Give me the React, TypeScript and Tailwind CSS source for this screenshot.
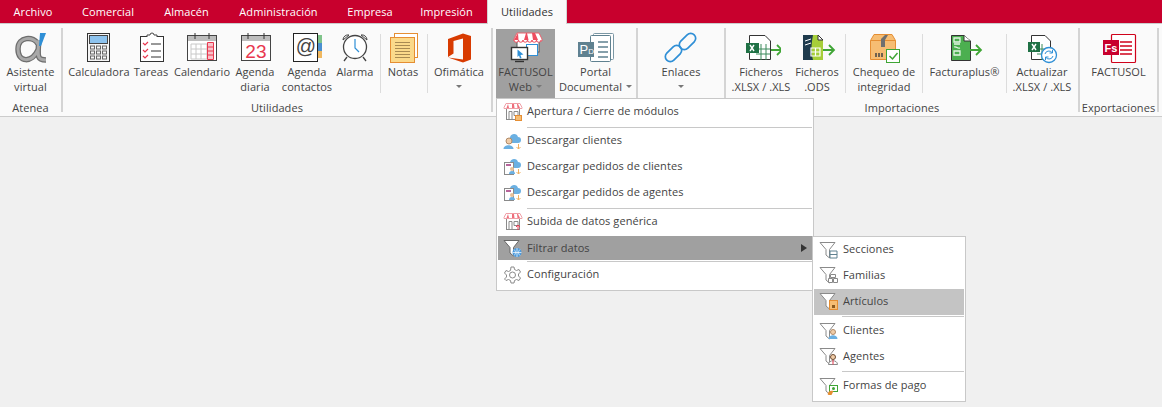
import React from "react";

type Ic = React.ReactNode;
const S = ({ children }: { children: Ic }) => (
  <svg width="40" height="32" viewBox="0 0 40 32" fill="none" className="block">{children}</svg>
);
const M = ({ children }: { children: Ic }) => (
  <svg width="20" height="20" viewBox="0 0 20 20" fill="none" className="block shrink-0">{children}</svg>
);

const Arrow = ({ x, y }: { x: number; y: number }) => (
  <path d={`M${x} ${y}h10M${x + 6} ${y - 5}l5 5l-5 5`} stroke="#3fa535" strokeWidth="1.8" />
);
const Doc = ({ x, y, w, h, fill = "#fff" }: { x: number; y: number; w: number; h: number; fill?: string }) => (
  <path d={`M${x + .5} ${y + .5}H${x + w - 6}L${x + w - .5} ${y + 6}V${y + h - .5}H${x + .5}Z`} fill={fill} stroke="#333" />
);

const alphaPath = "M27 12C23 4 7 4 7 17C7 31 21 31 27 18M28 8C26 26 27 28 35 28";

const icons: Record<string, Ic> = {
  alpha: (
    <S>
      <path d={alphaPath} stroke="#6e6e6e" strokeWidth="5.500" />
      <path d={alphaPath} stroke="#a8a8a8" strokeWidth="3" />
      <path d="M29 1h6l-5 13h-2z" fill="#2f8fd6" />
    </S>
  ),
  calc: (
    <S>
      <rect x="8.5" y="1.5" width="22" height="28" fill="#f5f5f5" stroke="#333" />
      <rect x="10.5" y="3.5" width="18" height="8" fill="#8dc3ee" stroke="#444" />
      {[15, 20, 25].map((y) => [11.5, 17.5, 23.5].map((x) => <rect key={`${x}${y}`} x={x} y={y - 1} width="4" height="3" stroke="#666" />))}
    </S>
  ),
  tasks: (
    <S>
      <rect x="9.5" y="4.5" width="23" height="25" fill="#fff" stroke="#333" />
      <path d="M16 5V3h3a2 2 0 014 0h3v2" fill="#fff" stroke="#444" />
      {[11, 18, 24].map((y) => (
        <g key={y}>
          <path d={`M12 ${y}l2 2l3-3`} stroke="#e8384f" strokeWidth="1.2" />
          <path d={`M20 ${y + 1}h10`} stroke="#333" />
        </g>
      ))}
    </S>
  ),
  cal: (
    <S>
      <rect x="5.5" y="3.5" width="29" height="25" fill="#fff" stroke="#444" />
      <rect x="6" y="4" width="28" height="5" fill="#bdbdbd" />
      <path d="M13 1v6M27 1v6" stroke="#333" />
      <path d="M9 12h16v15H9zM9 17h16M9 22h16M14 12v15M19 12v15" stroke="#c8c8c8" />
      <path d="M25.5 10.5h6v17h-6zM25.5 15h6M25.5 19h6M25.5 23h6" fill="#f9c3cb" stroke="#e8384f" />
    </S>
  ),
  agenda: (
    <S>
      <rect x="6.5" y="3.5" width="29" height="25" fill="#fff" stroke="#444" />
      <rect x="7" y="4" width="28" height="5" fill="#bdbdbd" />
      <path d="M13 1v6M29 1v6" stroke="#333" />
      <text x="21" y="26" textAnchor="middle" fontSize="19" fill="#e8384f" fontFamily="'Liberation Sans',sans-serif">23</text>
    </S>
  ),
  contacts: (
    <S>
      <rect x="31" y="3" width="4" height="8" fill="#7fc48a" />
      <rect x="31" y="11" width="4" height="8" fill="#4a90d0" />
      <rect x="31" y="19" width="4" height="7" fill="#f0b860" />
      <rect x="6.5" y="1.5" width="24" height="28" fill="#fff" stroke="#222" />
      <text x="19" y="21" textAnchor="middle" fontSize="20" fill="#444" fontFamily="'Liberation Sans',sans-serif">@</text>
    </S>
  ),
  alarm: (
    <S>
      <circle cx="20" cy="15" r="11.5" fill="#fff" stroke="#444" strokeWidth="1.3" />
      <path d="M8 8a5 5 0 016-5zM32 8a5 5 0 00-6-5z" fill="#fff" stroke="#444" />
      <path d="M20 7v9l4 4" stroke="#2f8fd6" strokeWidth="1.2" />
      <path d="M12 25l-3 4M28 25l3 4" stroke="#444" strokeWidth="1.3" />
    </S>
  ),
  notes: (
    <S>
      <rect x="11.5" y="1.5" width="23" height="24" fill="#fff" stroke="#e58e33" />
      <rect x="7.5" y="5.5" width="24" height="25" fill="#fbd98a" stroke="#e58e33" />
      {[10, 13, 16, 19, 22, 25].map((y) => <path key={y} d={`M12 ${y + .5}h15`} stroke="#a98a52" />)}
    </S>
  ),
  office: (
    <S>
      <path d="M9 25V7L24 1.5L32 4V27.5L24 30.5L9 25.5L24 27.5V6.5L14.5 9V21.5Z" fill="#d83b01" />
    </S>
  ),
  web: (
    <S>
      <rect x="11" y="6" width="22" height="14" fill="#fff" stroke="#555" />
      <path d="M11 1h22l3 6v2H8V7z" fill="#fff" stroke="#e8606c" />
      <path d="M12 1l-4 7h4.5zM20 1l-2 7h4.5L21 1zM29 1h-3l1 7h5z" fill="#ee4d5f" />
      <path d="M8 8a2 2 0 004.5 0a2 2 0 004.5 0a2 2 0 004.5 0a2 2 0 004.5 0a2 2 0 004.5 0a2 2 0 004.5 0" stroke="#ee4d5f" fill="#fff" />
      <rect x="20.5" y="12.5" width="11" height="11" fill="#fff" stroke="#2f8fd6" />
      <rect x="5.5" y="15.5" width="16" height="12" fill="#fff" stroke="#333" strokeWidth="1.4" />
      <path d="M9 29.5h9" stroke="#333" strokeWidth="1.4" />
      <path d="M11.5 17.5l6 5l-3 .5l1 3l-1.500 .5l-1-3l-1.500 1.500z" fill="#2f8fd6" />
    </S>
  ),
  portal: (
    <S>
      <rect x="17.500" y="1.500" width="20" height="26" rx="1" fill="#fff" stroke="#7b97a4" />
      <rect x="14.500" y="3.500" width="20" height="26" rx="1" fill="#fff" stroke="#5f8190" />
      <path d="M22 10h10M22 15h10M22 20h10M22 25h10" stroke="#5f8190" strokeWidth="1.6" />
      <rect x="2" y="10" width="16" height="15" fill="#5f8190" />
      <text x="3.500" y="22" fontSize="13" fill="#fff" fontFamily="'Liberation Sans',sans-serif">P<tspan fontSize="8">D</tspan></text>
    </S>
  ),
  link: (
    <S>
      <g stroke="#2f8fd6" strokeWidth="1.7">
        <rect x="3" y="16.500" width="19" height="10" rx="5" transform="rotate(-45 12.500 21.500)" />
        <rect x="17" y="4.500" width="19" height="10" rx="5" transform="rotate(-45 26.500 9.500)" />
      </g>
    </S>
  ),
  xls: (
    <S>
      <Doc x={8} y={3} w={22} h={25} />
      <path d="M15 17h14M15 22h14M20 12v16M25 12v16" stroke="#3b8a5a" />
      <rect x="5" y="11" width="13" height="10" fill="#1f7145" />
      <path d="M9 13l4 6M13 13l-4 6" stroke="#fff" strokeWidth="1.400" />
      <Arrow x={30} y={18} />
    </S>
  ),
  ods: (
    <S>
      <path d="M6 3h15l5 5v20H6z" fill="#a6ce39" />
      <path d="M6 3h10c-2 10-2 18 0 25H6z" fill="#1f3b4d" />
      <path d="M21 3l5 5h-5z" fill="#fff" stroke="#333" />
      <path d="M14 16h9v8h-9zM18.500 16v8M14 20h9" stroke="#fff" strokeWidth="1.200" />
      <path d="M8 9c2-1 4-1 6-2M8 13c2-1 4-1 6-2" stroke="#fff" />
      <Arrow x={26} y={18} />
    </S>
  ),
  box: (
    <S>
      <path d="M6.500 8.500L10 2.500H28L31.500 8.500V27.500H6.500Z" fill="#f6bd73" stroke="#e58e33" />
      <path d="M6.500 8.500H31.500" stroke="#e58e33" />
      <path d="M17 15V7l4-4h3l-3 5v7z" fill="#6f6f6f" />
      <path d="M12 21v4M15 21v4M18 21v4" stroke="#444" strokeWidth="1.500" />
      <rect x="22.500" y="17.500" width="13" height="13" fill="#fff" stroke="#3fa535" />
      <path d="M25.500 24l3 3l5-6" stroke="#3fa535" strokeWidth="1.500" />
    </S>
  ),
  fplus: (
    <S>
      <path d="M6.500 3.500H19L25.500 9V28.500H6.500Z" fill="#4caf50" stroke="#333" />
      <path d="M19 3.500V9H25.500" fill="#fff" stroke="#333" />
      <path d="M9 6h6v4H9zM9 12h6M9 15c3-1 3 2 6 1M9 19h6v4H9z" stroke="#e4f5e4" strokeWidth="1.300" />
      <Arrow x={25} y={18} />
    </S>
  ),
  xlsr: (
    <S>
      <Doc x={9} y={3} w={20} h={25} />
      <path d="M15 17h12M15 22h12M20 12v16" stroke="#3b8a5a" />
      <rect x="6" y="10" width="12" height="10" fill="#1f7145" />
      <path d="M10 12l4 6M14 12l-4 6" stroke="#fff" strokeWidth="1.400" />
      <circle cx="27" cy="23" r="7.500" fill="#fff" stroke="#2f8fd6" strokeWidth="1.300" />
      <path d="M23 22a4 4 0 017-1.500M31 24a4 4 0 01-7 1.500M30.500 18v3h-3M23.500 28v-3h3" stroke="#2f8fd6" />
    </S>
  ),
  fs: (
    <S>
      <rect x="12.500" y="2.500" width="24" height="28" rx="1" fill="#fff" stroke="#d0021b" strokeWidth="1.200" />
      <path d="M21 10h12M21 14h12M21 18h12M21 22h12" stroke="#d0021b" strokeWidth="1.700" />
      <rect x="4" y="8" width="16" height="15" fill="#c8002d" />
      <text x="12" y="20" textAnchor="middle" fontSize="11" fontWeight="700" fill="#fff" fontFamily="'Liberation Sans',sans-serif">Fs</text>
    </S>
  ),
};

const MStore = ({ badge }: { badge: Ic }) => (
  <M>
    <rect x="3.500" y="6.500" width="13" height="11" fill="#fff" stroke="#8a8a8a" />
    <path d="M3 1.500h14l2 4v1H1v-1z" fill="#fff" stroke="#f0a0a8" />
    <path d="M5 2L3.500 6h2.500zM9 2v4h2.500L11 2zM15 2h-1l.5 4h2.500z" fill="#ee6f7c" />
    <path d="M6 9.500h3v8H6zM11 9.500h4v4h-4z" stroke="#8a8a8a" />
    {badge}
  </M>
);
const Cloud = () => <path d="M7 8a4 4 0 014-5a4 4 0 014 3a3 3 0 010 6H9a2.500 2.500 0 01-2-4z" fill="#6bb0e2" />;
const DocMini = () => (
  <g>
    <rect x="1.500" y="6.500" width="9" height="12" fill="#fff" stroke="#8a8a8a" />
    <path d="M3 9h5" stroke="#a0307a" strokeWidth="1.500" />
    <circle cx="9" cy="13" r="2" fill="#e8c098" />
    <path d="M6 18a3 3 0 016 0z" fill="#6bb0e2" />
  </g>
);
const DownArr = () => <path d="M15.500 13v5M13.500 16l2 2l2-2" stroke="#f0b060" />;

const menuIcons: Record<string, Ic> = {
  open: <MStore badge={<rect x="12.500" y="13.500" width="6" height="5" fill="#f6bd73" stroke="#e58e33" />} />,
  cli: (
    <M>
      <Cloud />
      <circle cx="6" cy="10" r="3" fill="#f1cda8" stroke="#b08a68" />
      <path d="M0.500 18c0-5 10-5 10 0z" fill="#6bb0e2" />
      <DownArr />
    </M>
  ),
  ped: (
    <M>
      <Cloud />
      <DocMini />
      <DownArr />
    </M>
  ),
  up: <MStore badge={<path d="M15 18v-5M13 15l2-2l2 2" stroke="#e8384f" />} />,
  filt: (
    <M>
      <path d="M1 2.500h15L10.500 9.500V18L7 15V9.500z" fill="#fff" stroke="#666" />
      <circle cx="14" cy="14.500" r="4.500" fill="#4a9ade" />
      <path d="M9.500 14.500h9M14 10v9M11 11.500c2 2 2 4 0 6M17 11.500c-2 2-2 4 0 6" stroke="#fff" strokeWidth=".7" />
    </M>
  ),
  cfg: (
    <M>
      <circle cx="9.500" cy="10" r="3" stroke="#8a8a8a" />
      <path d="M8 2h3l.5 2.500l2 1l2.500-1l1.500 2.500l-2 2v2l2 2l-1.500 2.500l-2.500-1l-2 1l-.5 2.500H8l-.5-2.500l-2-1l-2.500 1L1.500 14l2-2v-2l-2-2L3 5.500l2.500 1l2-1z" stroke="#8a8a8a" />
    </M>
  ),
};

const Funnel = ({ children }: { children?: Ic }) => (
  <M>
    <path d="M1 2.500h15L10.500 9.500V18L7 15V9.500z" fill="#fff" stroke="#8a8a8a" />
    {children}
  </M>
);
const subIcons: Record<string, Ic> = {
  sec: <Funnel><path d="M11 11h7v7h-7zM11 14.500h7" stroke="#5f8190" fill="#fff" /></Funnel>,
  fam: <Funnel><path d="M11.500 9.500h5v3h-5zM9.500 13.500h4v4h-4zM14.500 13.500h4v4h-4z" stroke="#888" fill="#fff" /></Funnel>,
  art: <Funnel><rect x="10.500" y="9.500" width="8" height="9" fill="#f6bd73" stroke="#e58e33" /><path d="M13 14h3v3h-3z" fill="#8a5a20" /></Funnel>,
  cli: <Funnel><circle cx="14" cy="11" r="2.500" fill="#f1cda8" stroke="#b08a68" /><path d="M9.500 18c0-5 9-5 9 0z" fill="#6bb0e2" /></Funnel>,
  age: <Funnel><circle cx="14" cy="11" r="2.500" fill="#f1cda8" stroke="#6b4a30" /><path d="M9.500 18.500c0-5 9-5 9 0z" fill="#fff" stroke="#888" /><path d="M14 14v4.500" stroke="#e8384f" /></Funnel>,
  pay: <Funnel><rect x="10.500" y="9.500" width="8" height="6" fill="#fff" stroke="#3fa535" /><circle cx="14.500" cy="12.500" r="1.500" fill="#3fa535" /><path d="M8.500 18c1-3 3-4 6-3l-2 4h-3z" fill="#e58e33" /></Funnel>,
};

const Caret = ({ inline }: { inline?: boolean }) => (
  <svg width="6" height="3" viewBox="0 0 6 3" className={inline ? "inline-block ml-[4px]" : "block"}>
    <path d="M0 0h6L3 3z" fill="#777" />
  </svg>
);

type B = { icon: string; l1: string; l2?: string; caret?: "inline" | "below"; w: string; active?: boolean };

const Btn = ({ b }: { b: B }) => (
  <div className={`${b.w} shrink-0 flex flex-col items-center h-[69px] mt-[5px] ${b.active ? "bg-[#a0a0a0]" : ""}`}>
    <div className="h-[32px] mt-[3px] flex justify-center">{icons[b.icon]}</div>
    <div className="text-center leading-[15px] whitespace-nowrap">{b.l1}</div>
    <div className="text-center leading-[15px] h-[15px] whitespace-nowrap flex items-center justify-center">
      {b.l2}
      {b.caret === "inline" && <Caret inline />}
      {b.caret === "below" && <Caret />}
    </div>
  </div>
);

const Sep = () => <div className="w-px h-[59px] mt-[10px] bg-[#dcdcdc] shrink-0" />;

const Group = ({ label, w, children }: { label?: string; w: string; children: Ic }) => (
  <div className={`${w} shrink-0 flex flex-col h-full relative`}>
    <div className="flex flex-1 min-h-0">{children}</div>
    <div className="h-[18px] leading-[20px] text-center font-medium whitespace-nowrap">{label}</div>
  </div>
);
const GDiv = () => <div className="w-[2px] h-[84px] mt-[4px] bg-[#d4d4d4] shrink-0" />;

const tabs: [string, string][] = [
  ["Archivo", "w-[66px]"],
  ["Comercial", "w-[84px]"],
  ["Almacén", "w-[73px]"],
  ["Administración", "w-[111px]"],
  ["Empresa", "w-[72px]"],
  ["Impresión", "w-[81px]"],
];

const MenuItem = ({ icon, text, cls, hi, right }: { icon: Ic; text: string; cls: string; hi?: string; right?: boolean }) => (
  <div className={`flex items-center ${cls} ${hi ?? ""} pl-[5px] gap-[4px] relative`}>
    {icon}
    <span>{text}</span>
    {right && (
      <svg width="6" height="8" viewBox="0 0 6 8" className="absolute right-[5px] top-[8px]">
        <path d="M0 0l6 4l-6 4z" fill="#333" />
      </svg>
    )}
  </div>
);
const MSep = ({ cls }: { cls: string }) => <div className={`${cls} flex items-end`}><div className="ml-auto h-[1px] w-full bg-[#c8c8c8]" /></div>;

export default function App() {
  return (
    <div className="w-[1162px] h-[407px] relative overflow-hidden bg-[#f0f0f0] text-[#444444] text-[11px] tracking-[0.07px] font-['Open_Sans',sans-serif]">
      <div className="h-[23px] bg-[#c8002d] flex items-end text-white">
        {tabs.map(([t, w]) => (
          <div key={t} className={`${w} h-[23px] leading-[24px] text-center shrink-0`}>{t}</div>
        ))}
        <div className="w-[80px] h-[24px] -mb-[1px] bg-[#fafafa] text-[#333] text-center leading-[24px] relative z-10 border-x border-[#d4d4d4]">Utilidades</div>
      </div>
      <div className="h-[94px] bg-[#fafafa] border-y border-[#cccccc] flex">
        <Group label="Atenea" w="w-[61px]">
          <Btn b={{ icon: "alpha", l1: "Asistente", l2: "virtual", w: "w-[61px]" }} />
        </Group>
        <GDiv />
        <Group label="Utilidades" w="w-[428px]">
          <div className="w-[3px]" />
          <Btn b={{ icon: "calc", l1: "Calculadora", w: "w-[66px]" }} />
          <Btn b={{ icon: "tasks", l1: "Tareas", w: "w-[38px]" }} />
          <Btn b={{ icon: "cal", l1: "Calendario", w: "w-[64px]" }} />
          <Btn b={{ icon: "agenda", l1: "Agenda", l2: "diaria", w: "w-[42px]" }} />
          <Btn b={{ icon: "contacts", l1: "Agenda", l2: "contactos", w: "w-[62px]" }} />
          <Btn b={{ icon: "alarm", l1: "Alarma", w: "w-[34px]" }} />
          <div className="w-[8px]" />
          <Sep />
          <Btn b={{ icon: "notes", l1: "Notas", w: "w-[44px]" }} />
          <div className="w-[2px]" />
          <Sep />
          <Btn b={{ icon: "office", l1: "Ofimática", caret: "below", w: "w-[62px]" }} />
        </Group>
        <GDiv />
        <Group w="w-[143px]">
          <div className="w-[3px]" />
          <Btn b={{ icon: "web", l1: "FACTUSOL", l2: "Web", caret: "inline", w: "w-[59px]", active: true }} />
          <Btn b={{ icon: "portal", l1: "Portal", l2: "Documental", caret: "inline", w: "w-[81px]" }} />
        </Group>
        <GDiv />
        <Group w="w-[86px]">
          <Btn b={{ icon: "link", l1: "Enlaces", caret: "below", w: "w-[86px]" }} />
        </Group>
        <GDiv />
        <Group label="Importaciones" w="w-[352px]">
          <Btn b={{ icon: "xls", l1: "Ficheros", l2: ".XLSX / .XLS", w: "w-[70px]" }} />
          <Btn b={{ icon: "ods", l1: "Ficheros", l2: ".ODS", w: "w-[42px]" }} />
          <div className="w-[7px]" />
          <Sep />
          <Btn b={{ icon: "box", l1: "Chequeo de", l2: "integridad", w: "w-[76px]" }} />
          <Sep />
          <Btn b={{ icon: "fplus", l1: "Facturaplus®", w: "w-[83px]" }} />
          <Sep />
          <Btn b={{ icon: "xlsr", l1: "Actualizar", l2: ".XLSX / .XLS", w: "w-[70px]" }} />
        </Group>
        <GDiv />
        <Group label="Exportaciones" w="w-[77px]">
          <Btn b={{ icon: "fs", l1: "FACTUSOL", w: "w-[77px]" }} />
        </Group>
        <GDiv />
      </div>

      <div className="absolute left-[496px] top-[98px] w-[318px] h-[193px] bg-white border border-[#c8c8c8] px-px">
        <MenuItem icon={menuIcons.open} text="Apertura / Cierre de módulos" cls="h-[25px]" />
        <MSep cls="h-[4px] pl-[29px]" />
        <MenuItem icon={menuIcons.cli} text="Descargar clientes" cls="h-[25px]" />
        <MenuItem icon={menuIcons.ped} text="Descargar pedidos de clientes" cls="h-[26px]" />
        <MenuItem icon={menuIcons.ped} text="Descargar pedidos de agentes" cls="h-[26px]" />
        <MSep cls="h-[4px] pl-[29px]" />
        <MenuItem icon={menuIcons.up} text="Subida de datos genérica" cls="h-[25px]" />
        <div className="h-[2px]" />
        <MenuItem icon={menuIcons.filt} text="Filtrar datos" cls="h-[24px]" hi="bg-[#a0a0a0]" right />
        <MSep cls="h-[2px] pl-[29px]" />
        <MenuItem icon={menuIcons.cfg} text="Configuración" cls="h-[25px]" />
      </div>

      <div className="absolute left-[812px] top-[236px] w-[154px] h-[166px] bg-white border border-[#c8c8c8] px-px pt-[1px] z-10">
        <MenuItem icon={subIcons.sec} text="Secciones" cls="h-[25px] pb-[2px]" />
        <MenuItem icon={subIcons.fam} text="Familias" cls="h-[26px] pb-[2px]" />
        <MenuItem icon={subIcons.art} text="Artículos" cls="h-[26px] pb-[2px]" hi="bg-[#c4c4c4]" />
        <MSep cls="h-[2px] pl-[28px]" />
        <MenuItem icon={subIcons.cli} text="Clientes" cls="h-[25px] pt-[2px]" />
        <MenuItem icon={subIcons.age} text="Agentes" cls="h-[26px] pt-[2px]" />
        <MSep cls="h-[4px] pl-[28px]" />
        <MenuItem icon={subIcons.pay} text="Formas de pago" cls="h-[25px] pt-[2px]" />
      </div>
    </div>
  );
}
